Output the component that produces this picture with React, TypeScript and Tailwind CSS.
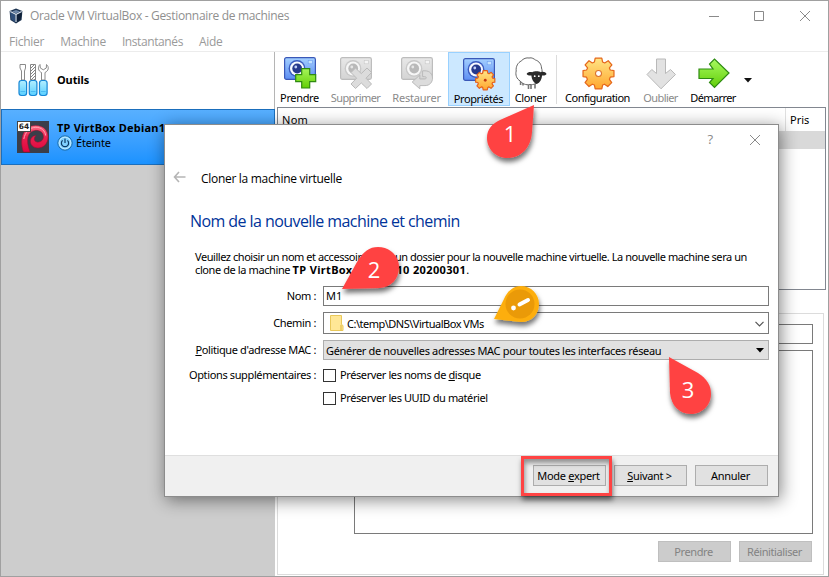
import { ReactNode } from "react";

function Label({ className = "tracking-[-0.4px]", children }: { className?: string; children: ReactNode }) {
  return <span className={"whitespace-nowrap leading-[14px] " + className}>{children}</span>;
}

function VBoxLogo() {
  return (
    <svg width="14" height="16" viewBox="0 0 14 16">
      <path d="M7 0.5 L13.4 3 L12.6 12 L7 15.6 L1.4 12 L0.6 3 Z" fill="#1c3350" />
      <path d="M7 2 L11 3.6 L7 5.6 L3 3.6 Z" fill="#6d87a8" />
      <path d="M1 4 L6 6.4 V14 L2.4 11.6 Z" fill="#2f4f7a" />
      <path d="M13 4 L8 6.4 V14 L11.6 11.6 Z" fill="#0f2038" />
      <path d="M1.3 3.6 L7 6.5 L12.7 3.6 M7 6.5 V14" stroke="#dfe8f2" strokeWidth="1.1" fill="none" />
    </svg>
  );
}

function ToolsIcon() {
  return (
    <svg width="32" height="34" viewBox="0 0 32 34">
      <defs>
        <linearGradient id="handle" x1="0" y1="0" x2="0" y2="1">
          <stop offset="0" stopColor="#b4efff" />
          <stop offset="1" stopColor="#58cfff" />
        </linearGradient>
        <pattern id="hatch" width="3" height="3" patternUnits="userSpaceOnUse">
          <path d="M0 3 L3 0" stroke="#777" strokeWidth="0.9" />
        </pattern>
      </defs>
      <path d="M2 1.5 H7.5 V5 L6.5 8 V17 H3.5 V8 L2 5 Z" fill="#fff" stroke="#8a8a8a" />
      <path d="M12.5 1.5 H17.5 V17 H12.5 Z" fill="#fff" stroke="#8a8a8a" />
      <path d="M12.5 1.5 H17.5 V17 H12.5 Z" fill="url(#hatch)" />
      <path d="M22 1.5 C19.5 4 20 8 23.5 9.5 V17 H27 V9.5 C30.5 8 31.5 4 28.5 1.5 L28.3 5 L25.3 6.8 L22.3 5 Z" fill="#fff" stroke="#8a8a8a" />
      {[1, 11.3, 21.5].map((x) => (
        <g key={x}>
          <rect x={x} y="17.5" width="7.6" height="15" rx="2.4" fill="url(#handle)" stroke="#1787d6" strokeWidth="1.2" />
          <path d={"M" + (x + 1.4) + " 28.5 h4.8"} stroke="#3fb4f0" strokeWidth="0.8" />
        </g>
      ))}
    </svg>
  );
}

function DebianIcon() {
  return (
    <svg width="32" height="32" viewBox="0 0 32 32">
      <defs>
        <linearGradient id="swirl" x1="0" y1="0" x2="0" y2="1">
          <stop offset="0" stopColor="#ff6f86" />
          <stop offset="0.45" stopColor="#e8204e" />
          <stop offset="1" stopColor="#e0063f" />
        </linearGradient>
      </defs>
      <rect width="32" height="32" fill="#3b3e49" />
      <path
        d="M6.5 31 C1.5 17 7.5 4.5 18.5 4.5 C27 4.5 31 10 31 16 C31 22.5 26.5 27 21 27 C16 27 13.2 23.6 13.4 20 C13.6 17 15.8 14.6 19 14.4 C17.2 16 16.8 18.4 18 20 C20 22.4 25.8 21 26.4 16.5 C27 11.5 22.5 9 18 9.4 C10.8 10.2 8.2 18.5 13 31 Z"
        fill="url(#swirl)"
        stroke="#9c0a2e"
        strokeWidth="0.5"
      />
      <path d="M6.8 18 C8 11 13 6.4 18.8 6.3 C24.5 6.2 28.2 10 28.6 14.5" fill="none" stroke="#ffa3b2" strokeWidth="1" />
      <rect x="0.5" y="0.5" width="13" height="10" fill="#fff" stroke="#444" />
      <text x="7" y="8.4" textAnchor="middle" fontFamily="DejaVu Sans" fontSize="7.5" fontWeight="bold" fill="#222">64</text>
    </svg>
  );
}

function PowerIcon() {
  return (
    <svg width="16" height="16" viewBox="0 0 16 16">
      <circle cx="8" cy="8" r="7.2" fill="#7fd0ff" stroke="#1d6dab" />
      <circle cx="8" cy="8" r="5.8" fill="none" stroke="#bfe9ff" />
      <path d="M5.6 5.4 A3.6 3.6 0 1 0 10.4 5.4 M8 3.4 V8" fill="none" stroke="#0d3b66" strokeWidth="1.2" />
    </svg>
  );
}

const GEAR =
  "M12.8 1 H19.2 L20 4.9 L22 5.8 L25.4 3.6 L29 7.6 L26.6 10.6 L27.4 12.6 L31 13.2 V19 L27.4 19.6 L26.6 21.6 L28.8 24.8 L25 28.6 L21.8 26.4 L20 27.2 L19.2 31 H12.8 L12 27.2 L10 26.4 L6.8 28.6 L3 24.8 L5.2 21.6 L4.4 19.6 L1 19 V13.2 L4.4 12.6 L5.4 10.6 L3 7.6 L6.8 3.6 L10 5.8 L12 4.9 Z";

function GearGradient({ id }: { id: string }) {
  return (
    <defs>
      <linearGradient id={id} x1="0" y1="0" x2="0" y2="1">
        <stop offset="0" stopColor="#ffe586" />
        <stop offset="1" stopColor="#ffa62e" />
      </linearGradient>
    </defs>
  );
}

function SnapshotBase({ gray }: { gray?: boolean }) {
  return (
    <g>
      <defs>
        <linearGradient id={gray ? "camg" : "camb"} x1="0" y1="0" x2="0" y2="1">
          <stop offset="0" stopColor={gray ? "#e8e8e8" : "#a4d0ff"} />
          <stop offset="1" stopColor={gray ? "#d4d4d4" : "#5c8df2"} />
        </linearGradient>
      </defs>
      <rect x="0.6" y="0.6" width="30.8" height="21.8" rx="1.8" fill={gray ? "url(#camg)" : "url(#camb)"} stroke={gray ? "#bdbdbd" : "#3a58b8"} strokeWidth="1.2" />
      <rect x="24.2" y="3.4" width="4.2" height="3.4" fill={gray ? "#f4f4f4" : "#c4e4ff"} stroke={gray ? "#c8c8c8" : "#6f9ff0"} strokeWidth="0.6" />
      <circle cx="13" cy="11.5" r="8.4" fill={gray ? "#c9c9c9" : "#3b5cc0"} />
      <circle cx="13" cy="11.5" r="7" fill={gray ? "#f6f6f6" : "#f8faff"} />
      <circle cx="13.2" cy="11.5" r="4.9" fill={gray ? "#b9b9b9" : "#26398c"} />
      <circle cx="11.8" cy="10" r="1.4" fill={gray ? "#e5e5e5" : "#c3d0f7"} />
    </g>
  );
}

function TakeIcon() {
  return (
    <svg width="33" height="33" viewBox="0 0 33 33">
      <SnapshotBase />
      <defs>
        <linearGradient id="plus" x1="0" y1="0" x2="0" y2="1">
          <stop offset="0" stopColor="#a6f55a" />
          <stop offset="1" stopColor="#63cf05" />
        </linearGradient>
      </defs>
      <path d="M17.7 11.7 H25.7 V17.7 H31.7 V24.7 H25.7 V31 H17.7 V24.7 H11.7 V17.7 H17.7 Z" fill="url(#plus)" stroke="#2f8a10" strokeWidth="1.2" />
    </svg>
  );
}

function DeleteIcon() {
  return (
    <svg width="33" height="33" viewBox="0 0 33 33">
      <SnapshotBase gray />
      <path d="M11 15.5 L15.5 11 L21.3 16.6 L27 11 L31.5 15.5 L26 21.2 L31.5 27 L27 31.5 L21.3 26 L15.5 31.5 L11 27 L16.6 21.2 Z" fill="#dcdcdc" stroke="#bababa" />
    </svg>
  );
}

function RestoreIcon() {
  return (
    <svg width="33" height="33" viewBox="0 0 33 33">
      <SnapshotBase gray />
      <path d="M11.2 25 L18.8 18 V22 H23.6 C25.8 22 25.8 19.6 23.6 19.6 H21.6 V13.8 H24 C34 13.8 34 28.6 24 28.6 H18.8 V31.8 Z" fill="#dcdcdc" stroke="#bababa" />
    </svg>
  );
}

function PropertiesIcon() {
  return (
    <svg width="33" height="33" viewBox="0 0 33 33">
      <SnapshotBase />
      <GearGradient id="gearSmall" />
      <g transform="translate(12 12) scale(0.64)">
        <path d={GEAR} fill="url(#gearSmall)" stroke="#e5601c" strokeWidth="1.8" strokeLinejoin="round" />
        <circle cx="16" cy="16" r="2.2" fill="#c23a10" />
      </g>
    </svg>
  );
}

function SettingsIcon() {
  return (
    <svg width="33" height="33" viewBox="0 0 32 32">
      <GearGradient id="gear" />
      <path d={GEAR} fill="url(#gear)" stroke="#e5681c" strokeWidth="1.2" strokeLinejoin="round" />
      <circle cx="16" cy="16" r="2.9" fill="#fff" stroke="#d9702c" />
    </svg>
  );
}

function SheepIcon() {
  return (
    <svg width="32" height="33" viewBox="0 0 32 33">
      <path d="M5.6 23 V28 M8 24 V28.5 M13.5 27 V32 M16 27 V32 M20 26 V31.5" stroke="#777" strokeWidth="1.6" />
      <path d="M14 1 C17 0.2 19 2 20.5 3 C24 4 26.5 7.5 26.5 11 C28 15 26.5 20 24.5 22.5 C23 26.5 18 28.2 15 27.5 C11 28.5 7 26.5 5.2 24 C1.5 22 0.2 17.5 1.2 14 C0.6 9.5 3 5.5 6.2 4 C8.5 1.4 11.5 0.5 14 1 Z" fill="#fff" stroke="#666" />
      <path d="M11.6 17 C12.6 14.8 15.4 14.6 17.2 15.2 C19 14 24 14 25.8 15.2 C27.8 14.4 30.6 14.8 31.6 17 C30.4 18.4 28.6 18.8 27 18.4 C26.8 22 25 25.6 21.8 27 C18.6 25.6 16.6 22 16.4 18.4 C14.6 18.8 12.8 18.4 11.6 17 Z" fill="#2a2a2a" />
      <circle cx="19.7" cy="19.2" r="0.9" fill="#fff" />
      <circle cx="23.8" cy="19.2" r="0.9" fill="#fff" />
    </svg>
  );
}

function DiscardIcon() {
  return (
    <svg width="31" height="32" viewBox="0 0 31 32">
      <path d="M10.5 1 H19.5 V15.5 L24.5 11.5 L29.5 16.5 L15 30.8 L1 16.5 L5.8 11.5 L10.5 15.5 Z" fill="#e2e2e2" stroke="#b9b9b9" />
    </svg>
  );
}

function StartIcon() {
  return (
    <svg width="32" height="31" viewBox="0 0 32 31">
      <defs>
        <linearGradient id="go" x1="0" y1="0" x2="0" y2="1">
          <stop offset="0" stopColor="#a8fa60" />
          <stop offset="1" stopColor="#62ce08" />
        </linearGradient>
      </defs>
      <path d="M1 11 H15 L11.5 6 L16.5 1 L31 15 L16.5 29.5 L11.5 24.5 L15 20.5 H1 Z" fill="url(#go)" stroke="#2e8b12" strokeWidth="1.2" />
    </svg>
  );
}

function Tool({ icon, label, width, track, disabled, active }: { icon: ReactNode; label: string; width: string; track: string; disabled?: boolean; active?: boolean }) {
  return (
    <div
      className={
        "flex h-[54px] shrink-0 flex-col items-center pt-[5px] " +
        width +
        (active ? " border border-[#99d1ff] bg-[#cce8ff]" : "")
      }
    >
      <div className="flex h-[33px] items-center justify-center">{icon}</div>
      <Label className={"mt-[1px] mr-px " + track + (disabled ? " text-[#8a8a8a]" : " text-black")}>{label}</Label>
    </div>
  );
}

function Toolbar() {
  return (
    <div className="flex h-[55px] shrink-0">
      <Tool icon={<TakeIcon />} label="Prendre" width="w-[46px]" track="tracking-[-0.35px]" />
      <Tool icon={<DeleteIcon />} label="Supprimer" width="w-[66px]" track="tracking-[-0.6px]" disabled />
      <Tool icon={<RestoreIcon />} label="Restaurer" width="w-[56px]" track="tracking-[-0.2px]" disabled />
      <Tool icon={<PropertiesIcon />} label="Propriétés" width="w-[62px] ml-[3px]" track="tracking-[-0.4px]" active />
      <Tool icon={<SheepIcon />} label="Cloner" width="w-[42px]" track="tracking-[-0.4px]" />
      <div className="mt-[3px] ml-[4px] h-[49px] w-px bg-[#dcdcdc]" />
      <Tool icon={<SettingsIcon />} label="Configuration" width="w-[82px]" track="tracking-[-0.5px]" />
      <Tool icon={<DiscardIcon />} label="Oublier" width="w-[44px]" track="tracking-[-0.6px]" disabled />
      <Tool icon={<StartIcon />} label="Démarrer" width="w-[61px]" track="tracking-[-0.6px]" />
      <svg className="mt-[26px]" width="8" height="5" viewBox="0 0 8 5">
        <path d="M0 0 H8 L4 4.5 Z" fill="#111" />
      </svg>
    </div>
  );
}

function Sidebar() {
  return (
    <div className="flex w-[274px] shrink-0 flex-col bg-[#cdcdcd]">
      <div className="flex h-[57px] shrink-0 items-start border-r border-[#b5b5b5] bg-white pt-[11px] pl-[17px]">
        <ToolsIcon />
        <Label className="mt-[10px] ml-[7px] font-bold tracking-[-0.1px]">Outils</Label>
      </div>
      <div className="flex h-[56px] shrink-0 border border-[#1b6fbd] bg-linear-to-b from-[#58b0ff] to-[#1a92ff] pt-[11px] pl-[15px]">
        <DebianIcon />
        <div className="ml-[8px] flex flex-col">
          <Label className="font-bold tracking-[0.22px]">TP VirtBox Debian10 2020</Label>
          <div className="flex items-center">
            <PowerIcon />
            <Label className="ml-[3px] tracking-[-0.2px]">Éteinte</Label>
          </div>
        </div>
      </div>
    </div>
  );
}

function Snapshots() {
  return (
    <div className="flex h-[183px] w-[549px] shrink-0 flex-col border border-[#828790] bg-white">
      <div className="flex h-[23px] shrink-0">
        <div className="w-[508px] border-r border-[#e0e0e0] pt-[4px] pl-[4px]">
          <Label className="tracking-[0.3px]">Nom</Label>
        </div>
        <div className="pt-[4px] pl-[4px]">
          <Label className="tracking-normal">Pris</Label>
        </div>
      </div>
      <div className="h-[18px] shrink-0 bg-[#d9d9d9]" />
    </div>
  );
}

function Details() {
  return (
    <div className="mt-[23px] flex h-[262px] w-[547px] flex-col items-end border border-[#dcdcdc] bg-white pr-[10px]">
      <div className="mt-[10px] h-[20px] w-[459px] shrink-0 border border-[#7a7a7a]" />
      <div className="mt-[6px] h-[184px] w-[459px] shrink-0 border border-[#7a7a7a]" />
      <div className="mt-[7px] mr-px flex gap-[8px]">
        <DisabledButton>Prendre</DisabledButton>
        <DisabledButton>Réinitialiser</DisabledButton>
      </div>
    </div>
  );
}

function DisabledButton({ children }: { children: ReactNode }) {
  return (
    <div className="flex h-[21px] w-[73px] items-center justify-center border border-[#bfbfbf] bg-[#cccccc] pr-[2px] text-[#838383]">
      <Label className="tracking-[-0.4px]">{children}</Label>
    </div>
  );
}

function Button({ children }: { children: ReactNode }) {
  return (
    <div className="flex h-[21px] w-[73px] items-center justify-center border border-[#adadad] bg-[#e1e1e1] pr-[2px]">
      <Label className="tracking-[-0.3px]">{children}</Label>
    </div>
  );
}

function Check({ children }: { children: ReactNode }) {
  return (
    <div className="flex h-[14px] items-center">
      <div className="h-[13px] w-[13px] border border-[#333] bg-white" />
      <Label className="ml-[4px] tracking-[-0.4px]">{children}</Label>
    </div>
  );
}

function FieldLabel({ children }: { children: ReactNode }) {
  return (
    <div className="mr-[7px] flex w-[125px] justify-end">
      <Label className="tracking-[-0.37px]">{children}</Label>
    </div>
  );
}

function CloneDialog() {
  return (
    <div className="absolute top-[123px] left-[163px] flex h-[373px] w-[615px] flex-col border border-[#8c8c8c] bg-white shadow-[2px_3px_16px_rgba(0,0,0,0.48)]">
      <div className="flex h-[30px] shrink-0 items-center justify-end pr-[17px] text-[#8a8a8a]">
        <span className="mr-[36px] mb-[2px] font-['Open_Sans'] text-[13px] leading-[16px]">?</span>
        <svg className="mb-px" width="12" height="12" viewBox="0 0 12 12">
          <path d="M1 1 L11 11 M11 1 L1 11" stroke="#8a8a8a" />
        </svg>
      </div>
      <div className="flex h-[47px] shrink-0 items-center pl-[8px]">
        <svg className="mb-[3px]" width="13" height="12" viewBox="0 0 13 12">
          <path d="M6 1 L1.5 6 L6 11 M1.5 6 H12.5" stroke="#b5b5b5" strokeWidth="1.6" fill="none" />
        </svg>
        <span className="ml-[15px] font-['Open_Sans'] text-[12px] leading-[16px] tracking-[-0.3px] whitespace-nowrap">Cloner la machine virtuelle</span>
      </div>
      <div className="h-[45px] shrink-0 pt-[8px] pl-[25px] font-['Open_Sans'] text-[16px] leading-[22px] tracking-[-0.57px] whitespace-nowrap text-[#003399]">
        Nom de la nouvelle machine et chemin
      </div>
      <div className="flex h-[39px] shrink-0 flex-col pt-[3px] pl-[30px]">
        <span className="leading-[13px] tracking-[-0.45px] whitespace-nowrap">
          Veuillez choisir un nom et accessoirement un dossier pour la nouvelle machine virtuelle. La nouvelle machine sera un
        </span>
        <span className="leading-[13px] tracking-[-0.4px] whitespace-nowrap">
          clone de la machine <b className="tracking-[0.35px]">TP VirtBox Debian10 20200301</b>.
        </span>
      </div>
      <div className="flex flex-1 flex-col pl-[26px]">
        <div className="flex h-[20px] items-center">
          <FieldLabel>Nom :</FieldLabel>
          <div className="flex h-[20px] w-[446px] items-center border border-[#7a7a7a] pl-[2px]">
            <Label className="tracking-normal">M1</Label>
          </div>
        </div>
        <div className="mt-[6px] flex h-[22px] items-center">
          <FieldLabel>Chemin :</FieldLabel>
          <div className="flex h-[22px] w-[446px] items-center border border-[#7a7a7a] pr-[4px] pl-[6px]">
            <svg width="14" height="16" viewBox="0 0 14 16">
              <path d="M0.5 0.5 H11.5 V9.5 L13 10.5 V15.5 H0.5 Z" fill="#ffe796" stroke="#e9c85a" />
              <path d="M11 10 V15.5" stroke="#e0b83f" />
            </svg>
            <Label className="mt-px ml-[3px] flex-1 tracking-[-0.5px]">C:\temp\DNS\VirtualBox VMs</Label>
            <svg className="mt-px" width="9" height="6" viewBox="0 0 9 6">
              <path d="M0.5 0.8 L4.5 4.8 L8.5 0.8" stroke="#555" strokeWidth="1.2" fill="none" />
            </svg>
          </div>
        </div>
        <div className="mt-[6px] flex h-[20px] items-center">
          <FieldLabel>
            <u>P</u>olitique d'adresse MAC :
          </FieldLabel>
          <div className="flex h-[20px] w-[446px] items-center border border-[#adadad] bg-[#e1e1e1] pr-[4px] pl-[2px]">
            <Label className="mt-px flex-1 tracking-[-0.33px]">Générer de nouvelles adresses MAC pour toutes les interfaces réseau</Label>
            <svg width="8" height="5" viewBox="0 0 8 5">
              <path d="M0 0 H8 L4 4.5 Z" fill="#000" />
            </svg>
          </div>
        </div>
        <div className="mt-[8px] flex h-[14px] items-center">
          <FieldLabel>Options supplémentaires :</FieldLabel>
          <Check>
            Préserver les noms de <u>d</u>isque
          </Check>
        </div>
        <div className="mt-[9px] flex pl-[132px]">
          <Check>Préserver les UUID du matériel</Check>
        </div>
      </div>
      <div className="flex h-[41px] shrink-0 gap-[8px] border-t border-[#dfdfdf] bg-[#f0f0f0] pt-[9px] pl-[368px]">
        <Button>
          Mode <u>e</u>xpert
        </Button>
        <Button>
          <u>S</u>uivant &gt;
        </Button>
        <Button>Annuler</Button>
      </div>
    </div>
  );
}

function Callouts() {
  return (
    <svg className="absolute -top-px -left-px" width="829" height="577" viewBox="0 0 829 577">
      <defs>
        <filter id="drop" x="-30%" y="-30%" width="160%" height="170%">
          <feDropShadow dx="1" dy="4" stdDeviation="2.5" floodColor="#000" floodOpacity="0.55" />
        </filter>
      </defs>
      <g filter="url(#drop)" fill="#ff4343">
        <path d="M534 105 L532 132 C531 148 521 158 507 158 C496 158 487 149 487 138 C487 129 492 124 500 120 Z" />
        <path d="M342 289 L357 262 C363 252 369 247 378 247 C390 247 399 256 399 267 C399 279 391 287 380 288 Z" />
        <path d="M669 357 L698 373 C707 379 711 385 711 394 C711 405 702 414 691 414 C679 414 671 405 670 393 Z" />
        <path d="M494 319 L504 299 C508 290 514 286 521 286 C531 286 539 294 539 304 C539 314 532 322 521 322 Z" fill="#fdae0b" />
      </g>
      <circle cx="520" cy="304" r="14.5" fill="#ea9a08" />
      <path d="M519.5 304.5 L528 300" stroke="#fff" strokeWidth="4" strokeLinecap="round" />
      <circle cx="513.5" cy="308" r="2.4" fill="#fff" />
      <g fill="#fff" fontFamily="Open Sans, sans-serif" fontSize="22" textAnchor="middle">
        <text x="510" y="142">1</text>
        <text x="374" y="278">2</text>
        <text x="688" y="398">3</text>
      </g>
    </svg>
  );
}

export default function App() {
  return (
    <div className="relative flex h-[577px] w-[829px] flex-col overflow-hidden border border-[#a0a0a0] bg-white font-['Noto_Sans'] text-[11px] text-black">
      <div className="flex h-[30px] shrink-0 items-center pl-[8px] font-['Open_Sans'] text-[12px] text-[#8f8f8f]">
        <VBoxLogo />
        <span className="ml-[7px] flex-1 tracking-[-0.32px] whitespace-nowrap">Oracle VM VirtualBox - Gestionnaire de machines</span>
        <svg width="102" height="12" viewBox="0 0 102 12" className="mr-[17px]">
          <path d="M0 6.5 H10 M45.5 1.5 H54.5 V10.5 H45.5 Z M91 1 L101 11 M101 1 L91 11" stroke="#8a8a8a" fill="none" />
        </svg>
      </div>
      <div className="flex h-[21px] shrink-0 items-start gap-[16px] border-b border-[#ececec] pt-[2px] pl-[8px] font-['Open_Sans'] text-[12px] leading-[18px] text-[#9a9a9a]">
        <span className="tracking-[-0.25px]">Fichier</span>
        <span className="tracking-[-0.3px]">Machine</span>
        <span className="tracking-[-0.4px]">Instantanés</span>
        <span className="tracking-[-0.3px]">Aide</span>
      </div>
      <div className="flex flex-1">
        <Sidebar />
        <div className="flex flex-1 flex-col pl-[2px]">
          <Toolbar />
          <Snapshots />
          <Details />
        </div>
      </div>
      <CloneDialog />
      <div className="absolute top-[455px] left-[520px] h-[40px] w-[91px] border-[3px] border-[#ff4343] shadow-[1px_4px_5px_rgba(0,0,0,0.5),inset_1px_4px_5px_rgba(0,0,0,0.4)]" />
      <Callouts />
      <div className="absolute -top-px -left-px h-px w-[152px] bg-[#8496a8]" />
      <div className="absolute -top-px left-[544px] h-px w-[166px] bg-[#8496a8]" />
      <div className="absolute -top-px -right-px h-[335px] w-px bg-[repeating-linear-gradient(to_bottom,#a0a0a0_0px,#a0a0a0_10px,#8a5a3a_11px,#3f4f78_14px,#b08040_17px)]" />
    </div>
  );
}
